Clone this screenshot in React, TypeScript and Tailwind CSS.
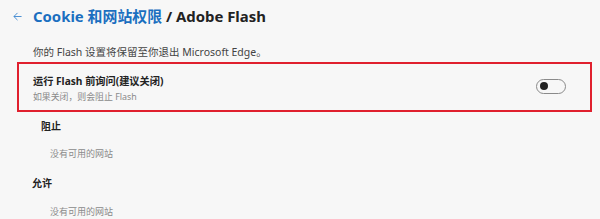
import React from "react";

export default function App() {
  return (
    <div className="w-[600px] h-[219px] overflow-hidden bg-[#f7f7f7] font-['Noto_Sans','Noto_Sans_CJK_SC',sans-serif]">
      <div className="flex items-center h-[32px] pt-[1px]">
        <div className="w-[33px] flex justify-center pl-[1px]">
          <svg width="9" height="9" viewBox="0 0 10 10" className="ml-[1px]">
            <path d="M9.5 5H1M5 1L1 5l4 4" fill="none" stroke="#3b86cf" strokeWidth="1" />
          </svg>
        </div>
        <div className="text-[14.9px] font-bold leading-none">
          <span className="text-[#1b6fc0]">Cookie 和网站权限</span>
          <span className="text-[#222]"> / Adobe Flash</span>
        </div>
      </div>
      <div className="pl-[33px] mt-[12px] text-[10.5px] leading-[16px] text-[#444]">
        你的 Flash 设置将保留至你退出 Microsoft Edge。
      </div>
      <div className="ml-[17px] mt-[2px] w-[575px] h-[50px] border-2 border-[#e0202e] flex items-center justify-between pl-[14px] pr-[24px]">
        <div className="flex flex-col pt-[4px]">
          <div className="text-[10.2px] leading-[16px] font-bold text-[#222]">运行 Flash 前询问(建议关闭)</div>
          <div className="text-[8.9px] leading-[16px] text-[#8a8a8a]">如果关闭，则会阻止 Flash</div>
        </div>
        <div className="w-[30px] h-[15px] rounded-full border border-[#8a8a8a] flex items-center pl-[3px] mb-[2px]">
          <div className="w-[8px] h-[8px] rounded-full bg-[#222]" />
        </div>
      </div>
      <div className="pl-[41px] mt-[6px] text-[10px] leading-[16px] font-bold text-[#222]">阻止</div>
      <div className="pl-[50px] mt-[12px] text-[9px] leading-[16px] text-[#8a8a8a]">没有可用的网站</div>
      <div className="pl-[32px] mt-[13px] text-[10px] leading-[16px] font-bold text-[#222]">允许</div>
      <div className="pl-[50px] mt-[13px] text-[9px] leading-[16px] text-[#8a8a8a]">没有可用的网站</div>
    </div>
  );
}
